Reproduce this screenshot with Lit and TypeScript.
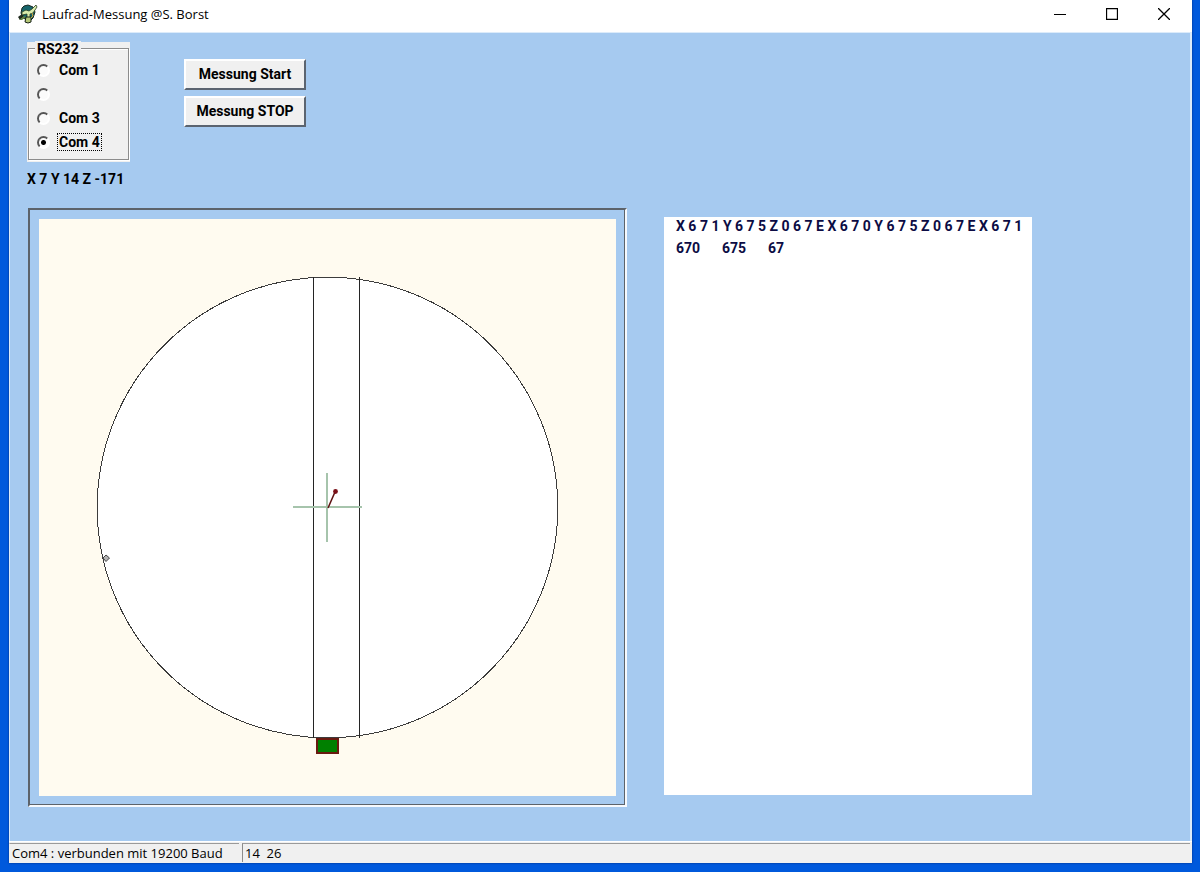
import { LitElement, html, css } from "lit";
import { customElement, state } from "lit/decorators.js";

interface Port {
  id: number;
  label: string;
}

@customElement("wheel-gauge")
export class WheelGauge extends LitElement {
  static styles = css`
    :host {
      display: block;
      padding: 9px;
      border: 2px solid;
      border-color: #5c636b #f6f9fd #f6f9fd #5c636b;
      box-shadow: inset -1px -1px 0 #5c636b;
    }
    .dial {
      display: block;
      width: 100%;
      height: auto;
      background: #fffbf0;
    }
  `;

  render() {
    return html`
      <svg class="dial" viewBox="0 0 577 577" role="img" aria-label="Laufrad" shape-rendering="crispEdges">
        <circle cx="288.5" cy="288.5" r="230.3" fill="#fff" stroke="#3c3c3c" />
        <path d="M274.5 58V519M320.5 58V519" stroke="#242424" fill="none" />
        <path d="M254 288H323M288 254V323" stroke="#a6c4ac" stroke-width="2" fill="none" />
        <g shape-rendering="geometricPrecision">
          <path d="M289 289L296 273" stroke="#5c1010" stroke-width="1.5" />
          <circle cx="296.5" cy="272.5" r="2.4" fill="#7a1018" />
          <path d="M64 339L67 336L70.500 339L67 342.500Z" fill="#b4b4b4" stroke="#444" />
        </g>
        <rect x="278" y="520" width="21" height="14" fill="#008000" stroke="#6a1a10" stroke-width="2" />
      </svg>
    `;
  }
}

@customElement("app-root")
export class AppRoot extends LitElement {
  static styles = css`
    :host {
      display: block;
      box-sizing: border-box;
      min-height: 100vh;
      padding: 0 8px 9px 9px;
      background: #0059dc;
      color: #000;
      font: 700 14px/18px Roboto, "Liberation Sans", sans-serif;
    }
    .window {
      display: flex;
      flex-direction: column;
      min-height: calc(100vh - 9px);
      background: #f0f0f0;
      box-shadow: 0 0 2px #002c80;
    }
    .titlebar {
      display: flex;
      align-items: center;
      height: 32px;
      padding: 0 2px 4px 9px;
      box-sizing: border-box;
      background: #fff;
    }
    .logo {
      width: 20px;
      height: 20px;
      margin-right: 4px;
    }
    .title {
      flex: 1;
      margin: 0;
      font: 400 13px/20px "Open Sans", "Noto Sans", sans-serif;
    }
    .caption {
      width: 52px;
      height: 28px;
      padding: 0;
      border: 0;
      background: none;
    }
    .caption svg {
      display: block;
      margin: auto;
    }
    .client {
      flex: 1;
      padding: 9px 0 20px 17px;
      background: #a6caf0;
      border: 1px solid #dcebfa;
      border-width: 1px 2px 0 1px;
    }
    .toolbar {
      display: flex;
      align-items: flex-start;
      gap: 54px;
    }
    .group {
      width: 103px;
      min-width: 0;
      box-sizing: border-box;
      margin: 0;
      padding: 6px 1px 2px;
      border: 0;
      background: #f0f0f0;
    }
    .frame {
      display: flex;
      flex-direction: column;
      gap: 6px;
      padding: 0 8px 8px;
      border: 1px solid #8c8c8c;
      box-shadow: 1px 1px 0 #fff, inset 1px 1px 0 #fff;
    }
    .legend {
      align-self: flex-start;
      margin: -8px 0 -2px -2px;
      padding: 0 2px;
      background: #f0f0f0;
      line-height: 16px;
    }
    .option {
      display: flex;
      align-items: center;
      gap: 7px;
      height: 18px;
    }
    .radio {
      appearance: none;
      width: 13px;
      height: 13px;
      margin: 0;
      border: 2px solid;
      border-color: #555 #fff #fff #555;
      border-radius: 50%;
      background: #fbfbfb;
      outline: none;
    }
    .radio:checked {
      background: radial-gradient(circle, #000 0 2px, #fbfbfb 3px);
    }
    .option-text {
      padding: 0 1px;
      border: 1px solid transparent;
      line-height: 16px;
    }
    .radio:checked + .option-text {
      border: 1px dotted #000;
    }
    .actions {
      display: flex;
      flex-direction: column;
      gap: 6px;
      padding-top: 17px;
    }
    .action {
      min-width: 122px;
      height: 31px;
      padding: 0 4px 2px;
      border: 2px solid;
      border-color: #fff #5b6470 #5b6470 #fff;
      background: #f0f0f0;
      color: #000;
      font: inherit;
    }
    .reading {
      margin: 8px 0 20px;
      white-space: pre;
    }
    .views {
      display: grid;
      grid-template-columns: 599fr 368fr 121fr;
      gap: 37px;
      padding-left: 1px;
    }
    .log {
      margin: 9px 0 12px;
      padding: 0 12px;
      background: #fff;
      color: #0c0c44;
      overflow: hidden;
      white-space: pre;
    }
    .line {
      margin: 0 0 4px;
    }
    .values {
      display: grid;
      grid-template-columns: repeat(3, 46px);
    }
    .status {
      display: flex;
      gap: 3px;
      padding: 1px 2px 1px 0;
      border-top: 1px solid #fff;
      font: 400 13px/18px "Open Sans", "Noto Sans", sans-serif;
    }
    .pane {
      padding: 0 2px;
      border-top: 1px solid #9a9a9a;
      border-left: 1px solid transparent;
    }
    .pane.link {
      width: 225px;
    }
    .pane.rest {
      flex: 1;
      border-left-color: #8c8c8c;
    }
  `;

  @state() private port = 4;

  private ports: Port[] = [
    { id: 1, label: "Com 1" },
    { id: 2, label: "" },
    { id: 3, label: "Com 3" },
    { id: 4, label: "Com 4" },
  ];

  private stream = "X671Y675Z067EX670Y675Z067EX671";

  render() {
    return html`
      <div class="window">
        <header class="titlebar">
          <svg class="logo" viewBox="0 0 20 20" aria-hidden="true">
            <path d="M6 2L10 1L15 3L17 8L15 14L12 17L5 14L3 9L4 4Z" fill="#17666c" stroke="#182820" />
            <path d="M0 13L4 10L6 10L5 13L2 16Z" fill="#202a20" />
            <path d="M4 8L8 6L11 7L14 5L18 1L19 3L15 9L12 10L12 14L9 14L9 10L4 11Z" fill="#d9ecac" stroke="#283c22" stroke-width=".8" />
            <path d="M1 16L6 12L8 13L4 16Z" fill="#5f8040" />
            <path d="M8 13H13V18L10 19L7 18Z" fill="#b5c778" stroke="#172217" />
            <path d="M14 9L15 12L13 14" fill="none" stroke="#d1a940" />
          </svg>
          <h1 class="title">Laufrad-Messung @S. Borst</h1>
          <button class="caption" aria-label="Minimieren">
            <svg width="12" height="12" stroke="#000" fill="none"><path d="M0 6.500H12" /></svg>
          </button>
          <button class="caption" aria-label="Maximieren">
            <svg width="12" height="12" stroke="#000" fill="none"><path d="M.5 .5H11.500V11.500H.5Z" stroke-width="1.300" /></svg>
          </button>
          <button class="caption" aria-label="Schließen">
            <svg width="12" height="12" stroke="#000" fill="none"><path d="M0 0L12 12M12 0L0 12" stroke-width="1.300" /></svg>
          </button>
        </header>
        <main class="client">
          <div class="toolbar">
            <div class="group" role="radiogroup" aria-labelledby="ports">
              <div class="frame">
                <span class="legend" id="ports">RS232</span>
                ${this.ports.map(
                  (p) => html`
                    <label class="option">
                      <input class="radio" type="radio" name="port" .checked=${p.id === this.port}
                        @change=${() => (this.port = p.id)} />
                      <span class="option-text">${p.label}</span>
                    </label>
                  `
                )}
              </div>
            </div>
            <div class="actions">
              <button class="action">Messung Start</button>
              <button class="action">Messung STOP</button>
            </div>
          </div>
          <p class="reading">X 7 Y 14 Z -171</p>
          <div class="views">
            <wheel-gauge></wheel-gauge>
            <section class="log"><p class="line">${this.stream.split("").join(" ")}</p><div class="values"><span>670</span><span>675</span><span>67</span></div></section>
          </div>
        </main>
        <footer class="status">
          <span class="pane link">Com4 : verbunden mit 19200 Baud</span>
          <span class="pane rest">14&nbsp; 26</span>
        </footer>
      </div>
    `;
  }
}
